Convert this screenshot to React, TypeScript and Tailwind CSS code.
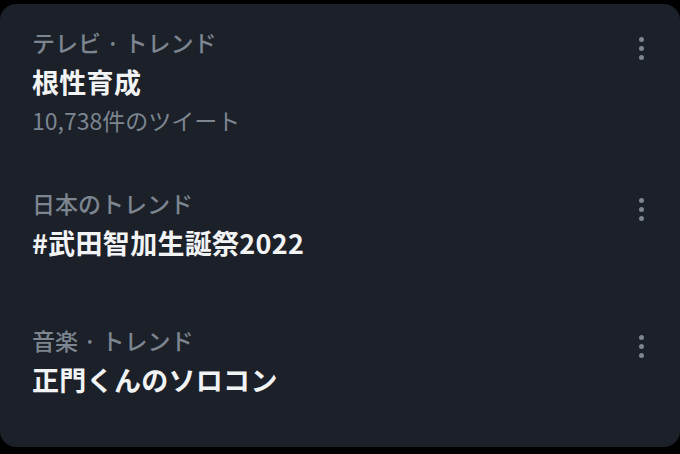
import React from 'react';

type Trend = {
  label: string;
  title: string;
  count?: string;
  pad: string;
};

const trends: Trend[] = [
  { label: 'テレビ · トレンド', title: '根性育成', count: '10,738件のツイート', pad: 'pt-[18px] pb-[45px]' },
  { label: '日本のトレンド', title: '#武田智加生誕祭2022', pad: 'pb-[57px]' },
  { label: '音楽 · トレンド', title: '正門くんのソロコン', pad: 'pb-[47px]' },
];

const MoreDots: React.FC = () => (
  <div className="flex flex-col items-center gap-[4px] pt-[15px]">
    <span className="block h-[5px] w-[5px] rounded-full bg-[#7c8590]" />
    <span className="block h-[5px] w-[5px] rounded-full bg-[#7c8590]" />
    <span className="block h-[5px] w-[5px] rounded-full bg-[#7c8590]" />
  </div>
);

const App: React.FC = () => {
  return (
    <div
      className="h-[454px] w-[680px] bg-black pt-[4px]"
      style={{ fontFamily: '"Noto Sans CJK JP", "Noto Sans", sans-serif' }}
    >
      <div className="h-[443px] rounded-[16px] bg-[#1b2029]">
        {trends.map((t) => (
          <div key={t.title} className={`flex justify-between pl-[32px] pr-[36px] ${t.pad}`}>
            <div className="flex flex-col">
              <span className="text-[23px] font-medium leading-[40px] text-[#7c8590]">{t.label}</span>
              <span className="text-[27px] font-bold leading-[40px] tracking-[0.3px] text-[#f2f3f4]">
                {t.title}
              </span>
              {t.count && (
                <span className="text-[23px] leading-[36px] text-[#7c8590]">{t.count}</span>
              )}
            </div>
            <MoreDots />
          </div>
        ))}
      </div>
    </div>
  );
};

export default App;
